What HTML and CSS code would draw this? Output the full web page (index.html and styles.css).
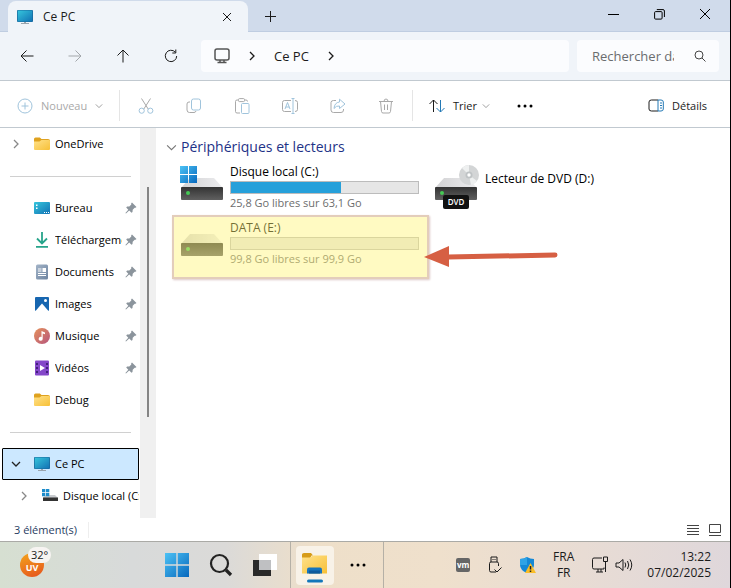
FILE: index.html
```html
<!DOCTYPE html>
<html lang="fr">
<head>
    <meta charset="UTF-8">
    <meta name="viewport" content="width=device-width, initial-scale=1.0">
    <title>Ce PC</title>
    <link rel="stylesheet" href="styles.css">
</head>
<body>
    <!-- shared icons -->
    <svg class="defs" width="0" height="0" aria-hidden="true">
        <defs>
            <linearGradient id="g-screen" x1="0" y1="0" x2="1" y2="1"><stop offset="0" stop-color="#35c5dc"/><stop offset="1" stop-color="#1272b4"/></linearGradient>
            <linearGradient id="g-folder" x1="0" y1="0" x2="1" y2="1"><stop offset="0" stop-color="#ffe18a"/><stop offset="1" stop-color="#f7c037"/></linearGradient>
            <linearGradient id="g-win" x1="0" y1="0" x2="1" y2="1"><stop offset="0" stop-color="#4cc2f5"/><stop offset="1" stop-color="#0768bd"/></linearGradient>
            <linearGradient id="g-body" x1="0" y1="0" x2="0" y2="1"><stop offset="0" stop-color="#333"/><stop offset="1" stop-color="#606060"/></linearGradient>
            <linearGradient id="g-top" x1="0" y1="0" x2="1" y2="0"><stop offset="0" stop-color="#d2d2d4"/><stop offset="1" stop-color="#ececee"/></linearGradient>
            <linearGradient id="g-music" x1="0" y1="0" x2="1" y2="1"><stop offset="0" stop-color="#e6925a"/><stop offset="1" stop-color="#b6557e"/></linearGradient>
            <linearGradient id="g-doc" x1="0" y1="0" x2="1" y2="1"><stop offset="0" stop-color="#a3b4c8"/><stop offset="1" stop-color="#6d84a0"/></linearGradient>
        </defs>
        <symbol id="pc" viewBox="0 0 16 16"><path fill="#9aa5ae" d="M7 12h2v2.500H7zM4 14h8v1H4z"/><rect y="1" width="16" height="12" rx="1" fill="#17679c"/><rect x=".7" y="1.600" width="14.600" height="10.800" rx=".5" fill="url(#g-screen)"/></symbol>
        <symbol id="folder" viewBox="0 0 16 16"><path fill="#dfa21f" d="M0 3q0-1.500 1.500-1.500h4.300L7.500 3H14q2 0 2 1.500V8H0z"/><path fill="url(#g-folder)" d="M0 5.500h5.500L7.500 4H15q1 0 1 1v8q0 1-1 1H1q-1 0-1-1z"/></symbol>
        <symbol id="pin" viewBox="0 0 12 12"><path fill="#8b949c" d="M7 .5 11.500 5l-1 .8-.8-.1-2 2-.2 2.300-1 .8-2.300-2.300L1 11.500l-.6-.5 2.900-3.200L1.200 5.600l.9-1 2.200-.2 2-2L6.200 1.300z"/></symbol>
        <symbol id="chev" viewBox="0 0 10 10"><path d="M3 1l4 4-4 4"/></symbol>
        <symbol id="chev-down" viewBox="0 0 10 10"><path d="M1 3l4 4 4-4"/></symbol>
        <symbol id="drive" viewBox="0 0 42 24"><path fill="url(#g-top)" d="M9 0h24l9 10H0z"/><rect y="9" width="42" height="13" rx="1" fill="url(#g-body)"/><circle cx="7" cy="15" r="2" fill="#45c955"/></symbol>
        <symbol id="win" viewBox="0 0 24 24"><path fill="url(#g-win)" d="M0 0h11.300v11.300H0zM12.700 0H24v11.300H12.700zM0 12.700h11.300V24H0zM12.700 12.700H24V24H12.700z"/></symbol>
    </svg>

    <div class="window">
        <header class="titlebar">
            <div class="tab">
                <svg class="icon"><use href="#pc"/></svg>
                <span class="tab-title">Ce PC</span>
                <button class="tab-btn" aria-label="Fermer l'onglet"><svg class="line" width="10" height="10"><path d="M1 1l8 8M9 1l-8 8"/></svg></button>
            </div>
            <button class="tab-new" aria-label="Nouvel onglet"><svg class="line" width="11" height="11"><path d="M5.500 0v11M0 5.500h11"/></svg></button>
            <div class="controls">
                <button aria-label="Réduire"><svg class="line" width="11" height="11"><path d="M0 5.500h11"/></svg></button>
                <button aria-label="Restaurer"><svg class="line" width="11" height="11"><rect x=".6" y="2.600" width="7.500" height="7.500" rx="1"/><path d="M2.800.6H9q1.400 0 1.400 1.400v6"/></svg></button>
                <button aria-label="Fermer"><svg class="line" width="12" height="12"><path d="M1 1l10 10M11 1L1 11"/></svg></button>
            </div>
        </header>

        <nav class="navbar">
            <button aria-label="Précédent"><svg class="line" width="14" height="14"><path d="M13.500 7H1M6.500 1.500L1 7l5.500 5.500"/></svg></button>
            <button aria-label="Suivant" disabled><svg class="line" width="14" height="14"><path d="M.5 7H13M7.500 1.500L13 7l-5.500 5.500"/></svg></button>
            <button aria-label="Dossier parent"><svg class="line" width="14" height="14"><path d="M7 13.500V1M1.500 6.500L7 1l5.500 5.500"/></svg></button>
            <button aria-label="Actualiser"><svg class="line" width="14" height="14"><path d="M11.300 3.200A5.700 5.700 0 1 0 12.700 7M11.800.5v3.500H8.300"/></svg></button>
            <div class="address">
                <svg class="line pc-line" width="16" height="16"><rect x="1" y="1" width="14" height="11" rx="2"/><path d="M3.500 14.500h9M6 12v2.500M10 12v2.500"/></svg>
                <svg class="line chev"><use href="#chev"/></svg>
                <a href="#">Ce PC</a>
                <svg class="line chev"><use href="#chev"/></svg>
            </div>
            <label class="search">
                <input type="text" placeholder="Rechercher dans : Ce PC" aria-label="Rechercher">
                <svg class="line" width="12" height="12"><circle cx="5" cy="5" r="4"/><path d="M8 8l3.500 3.500"/></svg>
            </label>
        </nav>

        <div class="toolbar">
            <button class="new" disabled><svg class="blue" width="16" height="16"><circle cx="8" cy="8" r="7"/><path d="M8 4.500v7M4.500 8h7"/></svg>Nouveau<svg class="line small"><use href="#chev-down"/></svg></button>
            <span class="sep"></span>
            <button class="tool" aria-label="Couper" disabled><svg class="line" width="16" height="16"><path d="M3.500.5l6.800 10.700M12.500.5L5.700 11.200"/><g class="blue"><circle cx="3.700" cy="12.700" r="2.600"/><circle cx="12.300" cy="12.700" r="2.600"/></g></svg></button>
            <button class="tool" aria-label="Copier" disabled><svg class="line" width="16" height="16"><path d="M4 4H3Q1 4 1 6v6q0 2.500 2.500 2.500H8q1.500 0 2-1.500"/><rect class="blue" x="5.500" y="1" width="9" height="11" rx="2"/></svg></button>
            <button class="tool" aria-label="Coller" disabled><svg class="line" width="16" height="16"><path d="M4.500 2H3Q1.500 2 1.500 3.500v10Q1.500 15 3 15h3M10.500 2H12q1.500 0 1.500 1.500"/><rect x="4.500" y=".6" width="6" height="3" rx="1"/><rect class="blue" x="7.500" y="5.500" width="7.500" height="10" rx="1"/></svg></button>
            <button class="tool" aria-label="Renommer" disabled><svg class="line" width="18" height="16"><path d="M10 2.500H3.500q-2 0-2 2v7q0 2 2 2H10M14 2.500q2.500 0 2.500 2v7q0 2-2.500 2"/><path class="blue" d="M12 .5v15M10.500.5h3M10.500 15.500h3M4 11l2.500-6.500L9 11M4.800 9h3.400"/></svg></button>
            <button class="tool" aria-label="Partager" disabled><svg class="line" width="16" height="16"><path d="M6 2.500H3.500q-2.500 0-2.500 2V12q0 2.500 2.500 2.500H11q2.500 0 2.500-2.500v-1"/><path class="blue" d="M9.500 1.200L15 6l-5.500 4.500V8Q6 7.500 4 10.500 4.500 4.500 9.500 4z"/></svg></button>
            <button class="tool" aria-label="Supprimer" disabled><svg class="line" width="16" height="16"><path d="M1 3.500h14M2.500 3.500l1 10Q3.700 15 5 15h6q1.300 0 1.500-1.500l1-10M6 3.500Q6 1 8 1t2 2.500M6.500 6.500v5.500M9.500 6.500v5.500"/></svg></button>
            <span class="sep"></span>
            <button class="sort"><svg class="line" width="16" height="14"><path d="M4.500 13V1M.5 5l4-4 4 4"/><path class="blue" d="M11.500 1v12M7.500 9l4 4 4-4"/></svg>Trier<svg class="line small"><use href="#chev-down"/></svg></button>
            <button class="tool more" aria-label="Plus"><svg width="16" height="4"><circle cx="2" cy="2" r="1.500"/><circle cx="8" cy="2" r="1.500"/><circle cx="14" cy="2" r="1.500"/></svg></button>
            <button class="details"><svg class="line" width="16" height="13"><path d="M10 1H3.500Q1 1 1 3v7q0 2 2.500 2H10"/><path class="blue" d="M10 1h3q2.300 0 2.300 2v7q0 2-2.300 2h-3zM12 4h2M12 6.500h2M12 9h2"/></svg>Détails</button>
        </div>

        <div class="content">
            <aside class="sidebar">
                <ul class="tree">
                    <li class="item"><svg class="line chev"><use href="#chev"/></svg><svg class="icon"><use href="#folder"/></svg><span>OneDrive</span></li>
                    <li class="rule"></li>
                    <li class="item"><svg class="icon" viewBox="0 0 16 16"><rect y="2" width="16" height="12" rx="1" fill="url(#g-screen)"/><path fill="#fff" d="M2 4.500h1.500V6H2zM2 7.500h1.500V9H2zM10 12h1v1h-1zM12 12h1v1h-1zM14 12h1v1h-1z"/></svg><span>Bureau</span><svg class="pin"><use href="#pin"/></svg></li>
                    <li class="item"><svg class="icon" viewBox="0 0 16 16"><path fill="none" stroke="#27a48b" stroke-width="1.800" d="M8 0v11M3 6.500l5 5 5-5M2 14.800h12"/></svg><span>Téléchargements</span><svg class="pin"><use href="#pin"/></svg></li>
                    <li class="item"><svg class="icon" viewBox="0 0 16 16"><rect x="2" y=".5" width="12" height="15" rx="1.500" fill="url(#g-doc)"/><path stroke="#fff" d="M4 5h3.500M4 7h3.500M4 9.500h8M4 11.500h8"/><path fill="#fff" d="M8.500 4H12v4H8.500z"/></svg><span>Documents</span><svg class="pin"><use href="#pin"/></svg></li>
                    <li class="item"><svg class="icon" viewBox="0 0 16 16"><rect x="1" y="1" width="14" height="14" rx="1" fill="#1766b0"/><path fill="#fff" d="M1.500 15L8 7.500l6.500 7.500z"/><circle cx="11.500" cy="4.500" r="1.500" fill="#fff"/></svg><span>Images</span><svg class="pin"><use href="#pin"/></svg></li>
                    <li class="item"><svg class="icon" viewBox="0 0 16 16"><circle cx="8" cy="8" r="8" fill="url(#g-music)"/><path fill="#fff" d="M7.500 3l3.500 1.500v1.800L8.700 5.500v5.200A2 2 0 1 1 7.500 9z"/></svg><span>Musique</span><svg class="pin"><use href="#pin"/></svg></li>
                    <li class="item"><svg class="icon" viewBox="0 0 16 16"><rect x="1" y=".5" width="14" height="15" rx="1" fill="#8447c9"/><path fill="#43207d" d="M2 3h2v2H2zM2 7h2v2H2zM2 11h2v2H2zM12 3h2v2h-2zM12 7h2v2h-2zM12 11h2v2h-2z"/><path fill="#fff" d="M6 5l5 3-5 3z"/></svg><span>Vidéos</span><svg class="pin"><use href="#pin"/></svg></li>
                    <li class="item"><svg class="icon"><use href="#folder"/></svg><span>Debug</span></li>
                    <li class="rule"></li>
                    <li class="item selected"><svg class="line chev"><use href="#chev-down"/></svg><svg class="icon"><use href="#pc"/></svg><span>Ce PC</span></li>
                    <li class="item child"><svg class="line chev"><use href="#chev"/></svg><svg class="icon" viewBox="0 0 16 16"><path fill="#c9ccd0" d="M4 7h9l3 3H1z"/><path fill="#333" d="M1 9.500h15V13H1z"/><path fill="#1d8ccb" d="M0 1h3.300v3.200H0zM4 1h3.300v3.200H4zM0 5h3.300v3.200H0zM4 5h3.300v3.200H4z"/></svg><span>Disque local (C:)</span></li>
                </ul>
                <div class="scrollbar"><div class="thumb"></div></div>
            </aside>

            <main class="pane">
                <h2><svg class="line"><use href="#chev-down"/></svg>Périphériques et lecteurs</h2>
                <div class="drives">
                    <div class="drive">
                        <svg class="drive-icon" viewBox="0 0 44 44"><use href="#drive" x="1" y="13" width="42" height="24"/><use href="#win" y="1" width="17" height="17"/></svg>
                        <div class="drive-info">
                            <div class="name">Disque local (C:)</div>
                            <div class="bar"><div class="fill" style="width: 59%"></div></div>
                            <div class="free">25,8 Go libres sur 63,1 Go</div>
                        </div>
                    </div>
                    <div class="drive dvd">
                        <svg class="drive-icon" viewBox="0 0 44 44"><use href="#drive" x="0" y="13" width="42" height="24"/><circle cx="34" cy="10" r="10" fill="#d3d5d6"/><path fill="#eef0f0" d="M34 10L27 3a10 10 0 0 1 7-3zM34 10l8 6a10 10 0 0 1-6 4z"/><circle cx="34" cy="10" r="3.500" fill="#bfc3c5"/><circle cx="34" cy="10" r="1.700" fill="#fff"/><rect x="8" y="30" width="26" height="14" rx="2" fill="#111"/><text class="dvd-text" x="21" y="40">DVD</text></svg>
                        <div class="drive-info"><div class="name">Lecteur de DVD (D:)</div></div>
                    </div>
                    <div class="drive marked">
                        <svg class="drive-icon" viewBox="0 0 44 44"><use href="#drive" x="1" y="13" width="42" height="24"/></svg>
                        <div class="drive-info">
                            <div class="name">DATA (E:)</div>
                            <div class="bar"></div>
                            <div class="free">99,8 Go libres sur 99,9 Go</div>
                        </div>
                        <svg class="arrow" viewBox="0 0 134 22"><path d="M24 12l107-2" stroke="#d65f43" stroke-width="5" stroke-linecap="round"/><path d="M0 12L25 1v21z" fill="#d65f43"/></svg>
                    </div>
                </div>
            </main>
        </div>

        <footer class="statusbar">
            <span class="count">3 élément(s)</span>
            <button aria-label="Détails"><svg class="line" width="12" height="12"><path d="M0 1.500h12M0 4.500h12M0 7.500h12M0 10.500h12"/></svg></button>
            <button aria-label="Grandes icônes"><svg class="line" width="12" height="12"><path d="M.5.500h11v8H.500zM0 11.500h12"/></svg></button>
        </footer>
    </div>

    <div class="taskbar">
        <button class="weather" aria-label="Météo"><span class="uv">UV</span><span class="temp">32°</span></button>
        <div class="apps">
            <button aria-label="Démarrer"><svg width="24" height="24"><use href="#win"/></svg></button>
            <button aria-label="Rechercher"><svg width="24" height="24" fill="none" stroke="#222"><circle cx="10.500" cy="10.500" r="8.500" stroke-width="2.200"/><path stroke-width="3.200" d="M17 17l5 5"/></svg></button>
            <button aria-label="Bureaux"><svg width="24" height="24"><path fill="#292929" d="M0 7h18v16H0z"/><path fill="#fff" d="M6 1h18v16H6z"/><path fill="#bfc0c2" d="M6 7h12v10H6z"/></svg></button>
            <button class="active" aria-label="Explorateur"><svg width="26" height="34" viewBox="0 0 26 34"><path fill="#d69b18" d="M0 6q0-1.500 2-1.500h7l2 2.500H9.500L8 10H0z"/><path fill="url(#g-folder)" d="M0 9h8l3-2h14v18H0z"/><path fill="#1674bd" d="M5 25v-4q0-2 2-2h11q2 0 2 2v4z"/><path fill="#0d5a9c" d="M7 22h11v3H7z"/><rect x="5" y="31" width="16" height="3" rx="1.500" fill="#1277ba"/></svg></button>
            <button class="overflow" aria-label="Plus"><svg width="16" height="4"><circle cx="2" cy="2" r="1.500"/><circle cx="8" cy="2" r="1.500"/><circle cx="14" cy="2" r="1.500"/></svg></button>
        </div>
        <div class="tray">
            <button class="vm" aria-label="VMware Tools">vm</button>
            <button aria-label="USB"><svg class="line" width="16" height="18"><path d="M4 6V1h6v5M5.500 3.500h1M7.500 3.500h1M9 16H4q-1.500 0-1.500-1.500V7.500Q2.500 6 4 6h6q1.500 0 1.500 1.500V10M7.500 13.500L10 16l4.500-4.500"/></svg></button>
            <button aria-label="Sécurité"><svg width="16" height="18"><path fill="#1488d6" d="M7 1q3 2 7 2v6q0 5-7 8-7-3-7-8V3q4 0 7-2z"/><path fill="#2ea3e6" d="M7 1v8H0V3q4 0 7-2z"/><path fill="#f9bd28" d="M10.500 7L16 17H5z"/><path stroke="#222" stroke-width="1.500" d="M10.500 10v3.500M10.500 14.500V16"/></svg></button>
            <button class="lang">FRA<br>FR</button>
            <div class="net-sound">
                <button aria-label="Réseau"><svg class="line" width="18" height="18"><path d="M11 2H3Q1.500 2 1.500 3.500v8Q1.500 13 3 13h10v-1.500M5 16h7M7 13v3M10 13v3M12.500 1h4v4.500h-4zM14.500 5.500V16"/></svg></button>
                <button aria-label="Son"><svg class="line" width="18" height="16"><path d="M1 6h3l4-3.500v11L4 10H1zM10 5.500q1.500 2.500 0 5M12.500 4q2.500 4 0 8M15 2.500q3.500 5.500 0 11"/></svg></button>
            </div>
            <button class="clock">13:22<br>07/02/2025</button>
        </div>
    </div>
</body>
</html>
```
FILE: styles.css
```css
* { box-sizing: border-box; }
body { margin: 0; min-height: 100vh; display: flex; flex-direction: column; font-family: "Open Sans", "Noto Sans", sans-serif; font-size: 12px; line-height: 16px; color: #1b1b1b; background: #fff; border-right: 1px solid #000; overflow: hidden; }
button { font: inherit; color: inherit; background: none; border: 0; padding: 0; display: flex; align-items: center; justify-content: center; }
svg { flex: none; }
.defs { position: absolute; }
.line { fill: none; stroke: currentColor; }
.icon { width: 16px; height: 16px; }
.chev { width: 10px; height: 10px; stroke-width: 1.3; }
.window { flex: 1; display: flex; flex-direction: column; }

.titlebar { display: flex; height: 32px; padding-left: 8px; background: #d0dbeb; box-shadow: inset 0 -1px #bfcde1; }
.tab { display: flex; align-items: center; width: 240px; margin-top: 1px; padding-left: 9px; background: #f0f4f9; border-radius: 8px 8px 0 0; }
.tab-title { flex: 1; padding-left: 10px; }
.tab-btn { width: 43px; height: 30px; }
.tab-new { width: 45px; }
.controls { display: flex; margin-left: auto; padding: 0 2px 4px 0; }
.controls button { width: 46px; color: #000; }

.navbar { display: flex; align-items: center; height: 49px; padding: 0 11px 0 3px; background: #f0f4f9; border-bottom: 1px solid #c1c9d0; }
.navbar > button { width: 48px; height: 32px; }
.navbar > button:disabled { color: #a3a7ab; }
.address { flex: 1; display: flex; align-items: center; height: 32px; margin-left: 6px; padding-left: 13px; background: #fbfcfe; border-radius: 4px; font-size: 13px; }
.address a { color: inherit; text-decoration: none; margin: 0 17px; }
.pc-line { color: #555; margin-right: 17px; stroke-width: 1.5; }
.search { display: flex; align-items: center; width: 142px; height: 32px; margin-left: 8px; padding: 0 13px 0 15px; background: #fbfcfe; border-radius: 4px; color: #444; }
.search input { flex: 1; min-width: 0; margin-right: 20px; padding: 0; border: 0; outline: 0; background: none; font: inherit; font-size: 13px; }
.search input::placeholder { color: #6a6c6e; }

.toolbar { display: flex; align-items: center; height: 47px; padding: 3px 23px 0 17px; border-bottom: 1px solid #c1c9d0; font-size: 11px; }
.toolbar button { height: 32px; }
.toolbar button:disabled { color: #a9a9a9; }
.toolbar .blue { fill: none; stroke: #2379b5; }
.toolbar button:disabled .blue { stroke: #a0c4dc; }
.toolbar .small { width: 8px; height: 8px; color: #888; }
.new { gap: 8px; width: 86px; justify-content: flex-start; }
.sep { width: 1px; height: 31px; margin: 0 2px 0 16px; background: #e5e5e5; }
.tool { width: 48px; }
.tool + .sep { margin: 0 16px 0 2px; }
.sort { gap: 8px; }
.sort .small { margin-left: -3px; }
.more { margin-left: 11px; }
.details { gap: 8px; margin-left: auto; }

.content { flex: 1; display: flex; min-height: 0; }
.sidebar { display: flex; width: 156px; flex: none; }
.tree { flex: 1; min-width: 0; list-style: none; margin: 0; padding: 0 1px 0 2px; font-size: 11px; color: #000; }
.item { display: flex; align-items: center; height: 32px; padding-left: 32px; }
.item .icon { margin-right: 5px; }
.item span { flex: 1; min-width: 0; overflow: hidden; white-space: nowrap; }
.item .chev { margin: 0 13px 0 -23px; color: #888; }
.item.selected { background: #cce8ff; border: 1px solid #000; border-radius: 1px; padding-left: 31px; }
.item.selected .chev { color: #222; }
.item.child { padding-left: 40px; }
.pin { width: 12px; height: 12px; margin: 0 2px 0 3px; }
.rule { height: 32px; padding: 16px 8px; }
.rule::before { content: ""; display: block; height: 1px; background: #d0d0d0; }
.scrollbar { width: 16px; padding: 59px 7px 101px; background: #f0f0f0; }
.thumb { width: 2px; height: 100%; background: #858585; }

.pane { flex: 1; padding: 9px 0 0 16px; }
.pane h2 { display: flex; align-items: center; margin: 0 0 3px -6px; font-size: 14px; font-weight: normal; line-height: 20px; color: #1e3287; }
.pane h2 svg { width: 11px; height: 11px; margin-right: 4px; color: #777; }
.drives { display: grid; grid-template-columns: 255px 255px; grid-auto-rows: 56px; }
.drive { position: relative; display: flex; padding: 4px 8px 0; }
.drive-icon { width: 44px; height: 44px; margin: 1px 6px 0 0; }
.drive-info { flex: 1; }
.drive:not(.dvd) .drive-icon { margin-right: 6px; }
.name { color: #000; white-space: nowrap; }
.bar { height: 13px; margin: 1px 0; border: 1px solid #bcbcbc; background: #e6e6e6; }
.fill { height: 100%; background: #26a0da; }
.free { font-size: 11px; color: #6d6d6d; }
.dvd .name { padding-top: 7px; }
.dvd-text { font-size: 8px; font-weight: 600; fill: #fff; text-anchor: middle; }
.marked::after { content: ""; position: absolute; inset: -1px -2px -7px 0; background: rgba(255, 245, 120, .45); border: 2px solid #e3cdbb; box-shadow: 1px 1px 2px #dcc8c8; }
.arrow { position: absolute; z-index: 1; left: 252px; top: 29px; width: 134px; height: 22px; fill: none; }

.statusbar { display: flex; align-items: center; height: 23px; padding: 0 9px 0 14px; font-size: 11px; color: #1f3c5f; }
.count { margin-right: auto; padding-right: 11px; border-right: 1px solid #eee; }
.statusbar button { width: 12px; margin-left: 10px; color: #444; }

.taskbar { display: flex; align-items: center; height: 47px; border-top: 1px solid #aaaaa6; background: linear-gradient(90deg, #d6dfd1, #d8dada 18%, #dbdad8 31%, #eedfc9 43%, #efe0cc 60%, #e8dcd4 80%, #dfd7db); }
.weather { position: relative; width: 24px; height: 24px; margin-left: 20px; }
.uv { width: 24px; height: 24px; padding-top: 10px; border-radius: 50%; background: linear-gradient(160deg, #f3a51c, #e5521e); color: #fff; font-size: 9px; font-weight: bold; line-height: 10px; }
.temp { position: absolute; left: 8px; top: -6px; padding: 0 3px; border-radius: 8px; background: #f7f4f2; font-size: 11px; }
.apps { display: flex; margin-left: 111px; height: 100%; align-items: center; }
.apps button { width: 44px; height: 46px; }
.apps .active { width: 48px; margin-left: 3px; border-left: 1px solid #b5b0a6; }
.apps .active svg { width: 38px; height: 39px; padding: 0 6px; background: #f8f2e8; border-radius: 4px; }
.apps .overflow { width: 46px; padding-right: 5px; border-right: 1px solid #b5b0a6; }
.tray { display: flex; align-items: center; gap: 17px; margin-left: auto; padding-right: 19px; }
.tray button { color: #1b1b1b; }
.vm { width: 14px; height: 14px; border-radius: 2px; background: #666; font-size: 8px; font-weight: bold; line-height: 14px; }
.tray .vm { color: #fff; }
.net-sound { display: flex; align-items: center; gap: 6px; margin-right: -3px; }
.lang { text-align: center; }
.clock { text-align: right; }
```
